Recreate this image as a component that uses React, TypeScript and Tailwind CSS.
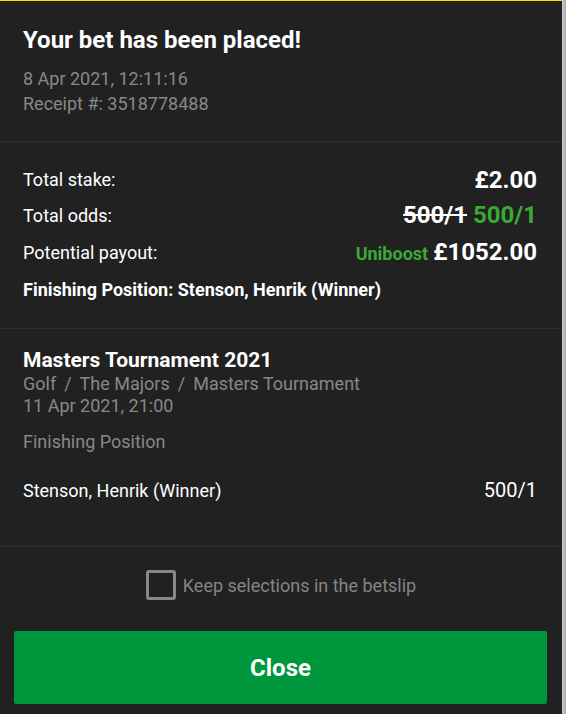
import React from "react";

export default function App() {
  return (
    <div className="flex h-[714px] w-[566px] bg-[#212121]" style={{ fontFamily: "Roboto, 'Liberation Sans', sans-serif" }}>
      <div className="flex w-[562px] flex-col border-t border-[#ffe000] bg-[#212121]">
        <div className="border-b border-[#2c2c2c] px-[23px] pt-[25px] pb-[25px]">
          <div className="text-[24px] font-bold leading-[28px] text-white">Your bet has been placed!</div>
          <div className="mt-[12px] text-[18px] leading-[25px] text-[#888888]">8 Apr 2021, 12:11:16</div>
          <div className="text-[18px] leading-[25px] text-[#888888]">Receipt #: 3518778488</div>
        </div>
        <div className="border-b border-[#2c2c2c] pr-[25px] pl-[23px] pt-[20px] pb-[26px]">
          <div className="flex h-[35px] items-center justify-between">
            <span className="text-[18px] text-white">Total stake:</span>
            <span className="text-[24px] font-bold text-white">£2.00</span>
          </div>
          <div className="flex h-[36px] items-center justify-between">
            <span className="text-[18px] text-white">Total odds:</span>
            <span className="text-[24px] font-bold">
              <span className="text-white line-through">500/1</span>{" "}
              <span className="text-[#3aaa35]">500/1</span>
            </span>
          </div>
          <div className="flex h-[38px] items-center justify-between">
            <span className="text-[18px] text-white">Potential payout:</span>
            <span className="flex items-baseline gap-[5px]">
              <span className="text-[18px] font-bold text-[#3aaa35]">Uniboost</span>
              <span className="text-[24px] font-bold text-white">£1052.00</span>
            </span>
          </div>
          <div className="mt-[7px] text-[18px] font-bold leading-[24px] text-white">Finishing Position: Stenson, Henrik (Winner)</div>
        </div>
        <div className="border-b border-[#2c2c2c] pr-[25px] pl-[23px] pt-[19px] pb-[44px]">
          <div className="text-[21px] font-bold leading-[24px] text-white">Masters Tournament 2021</div>
          <div className="flex text-[18px] leading-[24px] text-[#888888]">
            <span>Golf</span>
            <span className="mx-[8px]">/</span>
            <span>The Majors</span>
            <span className="mx-[8px]">/</span>
            <span>Masters Tournament</span>
          </div>
          <div className="text-[18px] leading-[20px] text-[#888888]">11 Apr 2021, 21:00</div>
          <div className="mt-[14px] text-[18px] leading-[24px] text-[#888888]">Finishing Position</div>
          <div className="mt-[24px] flex h-[24px] items-center justify-between">
            <span className="text-[18px] text-white">Stenson, Henrik (Winner)</span>
            <span className="text-[20px] text-white">500/1</span>
          </div>
        </div>
        <div className="mt-[23px] mb-[31px] flex h-[30px] items-center justify-center gap-[7px]">
          <div className="h-[30px] w-[30px] rounded-[3px] border-[3px] border-[#888888]" />
          <span className="text-[18px] text-[#858585]">Keep selections in the betslip</span>
        </div>
        <div className="pl-[14px] pr-[15px]">
          <button className="flex h-[73px] w-full items-center justify-center rounded-[2px] bg-[#00963c] text-[24px] font-bold text-white">Close</button>
        </div>
      </div>
      <div className="w-[4px] bg-gradient-to-r from-[#d0d0d0] to-[#a8a8a8]" />
    </div>
  );
}
